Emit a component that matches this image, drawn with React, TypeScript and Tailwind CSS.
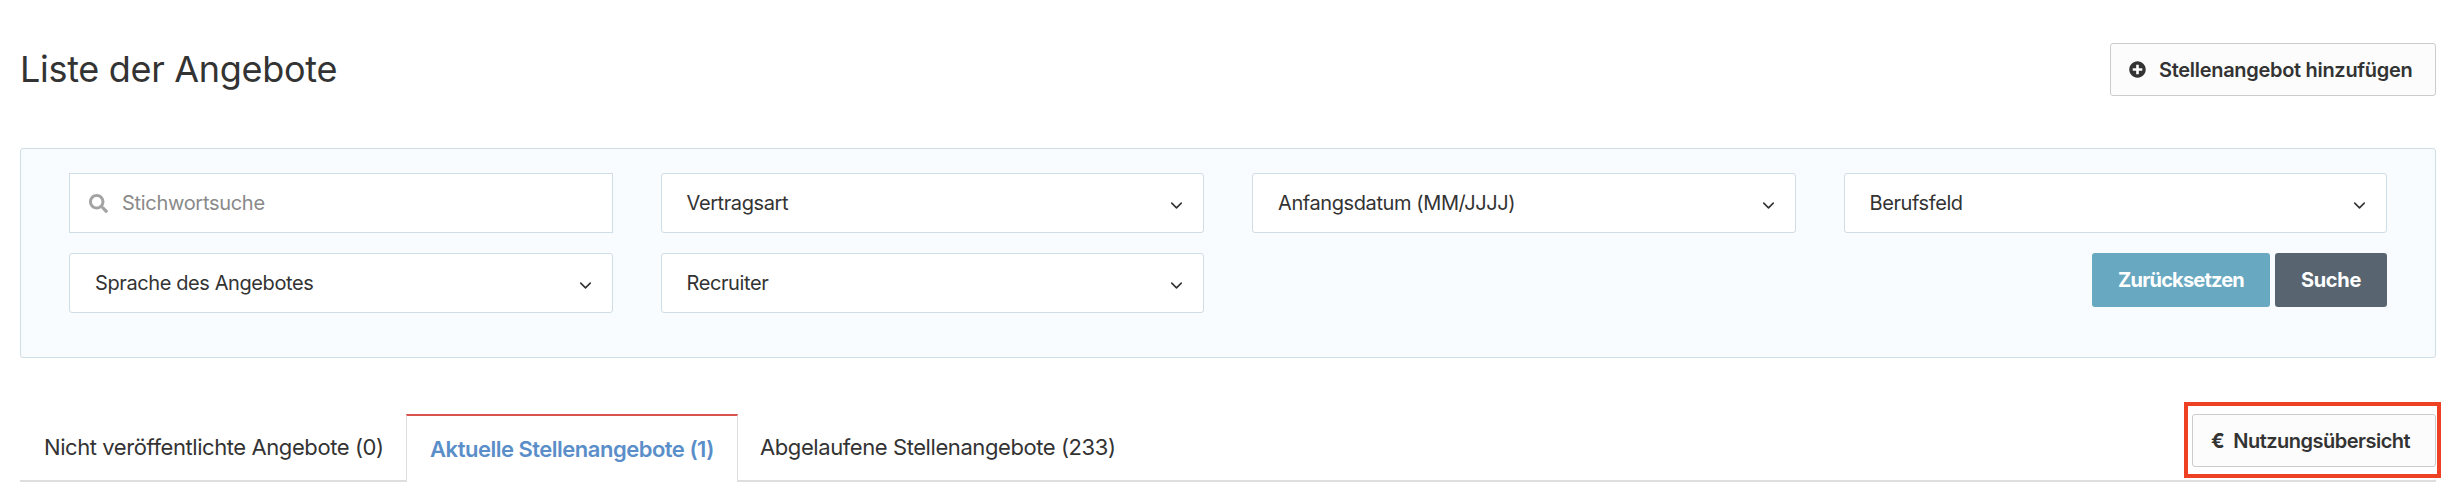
import { ChevronDown } from "lucide-react";
import { FaPlusCircle, FaSearch } from "react-icons/fa";

const SelectBox = ({ label }: { label: string }) => (
  <div className="flex h-[60px] items-center justify-between rounded-[3px] border border-[#cfdde6] bg-white pl-[25px] pr-[17px] text-[20px] tracking-[-0.4px] text-[#333]">
    <span>{label}</span>
    <ChevronDown size={19} strokeWidth={2} className="mt-1 text-[#333]" />
  </div>
);

const OutlineButton = ({ children }: { children: React.ReactNode }) => (
  <button className="flex h-[53px] items-center rounded-[3px] border border-[#cccccc] bg-[#fcfcfc] text-[20px] font-semibold tracking-[-0.3px] text-[#333]">
    {children}
  </button>
);

export default function App() {
  return (
    <div className="h-[500px] w-[2450px] overflow-hidden bg-white pl-5 pr-[14px] pt-[43px] font-['Inter',sans-serif]">
      {/* header */}
      <div className="flex items-center justify-between">
        <h1 className="text-[36px] font-normal leading-[53px] tracking-[-0.3px] text-[#333]">Liste der Angebote</h1>
        <OutlineButton>
          <span className="flex w-[324px] items-center gap-[13px] pl-[18px]">
            <FaPlusCircle size={17} />
            Stellenangebot hinzufügen
          </span>
        </OutlineButton>
      </div>

      {/* filters */}
      <div className="mt-[52px] grid h-[210px] grid-cols-4 content-start gap-x-12 gap-y-5 rounded-[3px] border border-[#cfdde6] bg-[#f8fcff] pl-12 pr-12 pt-6">
        <div className="flex h-[60px] items-center gap-[14px] border border-[#cfdde6] bg-white pl-[19px] text-[20px] tracking-[-0.3px] text-[#8a8a8a]">
          <FaSearch size={19} className="text-[#a3a3a3]" />
          <span>Stichwortsuche</span>
        </div>
        <SelectBox label="Vertragsart" />
        <SelectBox label="Anfangsdatum (MM/JJJJ)" />
        <SelectBox label="Berufsfeld" />
        <SelectBox label="Sprache des Angebotes" />
        <SelectBox label="Recruiter" />
        <div />
        <div className="flex items-start justify-end gap-[5px]">
          <button className="h-[54px] w-[178px] rounded-[3px] bg-[#68a8c0] text-[20px] font-bold tracking-[-0.8px] text-white">
            Zurücksetzen
          </button>
          <button className="h-[54px] w-[112px] rounded-[3px] bg-[#586570] text-[20px] font-bold tracking-[-0.3px] text-white">
            Suche
          </button>
        </div>
      </div>

      {/* tabs */}
      <div className="mt-[56px] flex h-[68px] items-stretch justify-between border-b-2 border-[#dedede]">
        <div className="flex text-[22px] tracking-[-0.42px] text-[#333]">
          <div className="flex w-[386px] items-center pl-6">Nicht veröffentlichte Angebote (0)</div>
          <div className="-mb-[2px] flex w-[332px] items-center justify-center border-x border-t-2 border-x-[#dedede] border-t-[#d9534f] bg-white font-semibold tracking-[-0.5px] text-[#5a8ec9]">
            Aktuelle Stellenangebote (1)
          </div>
          <div className="flex items-center pl-[22px]">Abgelaufene Stellenangebote (233)</div>
        </div>
        <div className="relative h-[53px]">
          <OutlineButton>
            <span className="flex w-[242px] items-center gap-[9px] pl-[18px] tracking-[-0.5px]">
              <span className="font-bold">€</span>
              Nutzungsübersicht
            </span>
          </OutlineButton>
          <div className="absolute -bottom-[11px] -left-[8px] -right-[5px] -top-[12px] border-[4px] border-[#ee4023]" />
        </div>
      </div>
    </div>
  );
}
